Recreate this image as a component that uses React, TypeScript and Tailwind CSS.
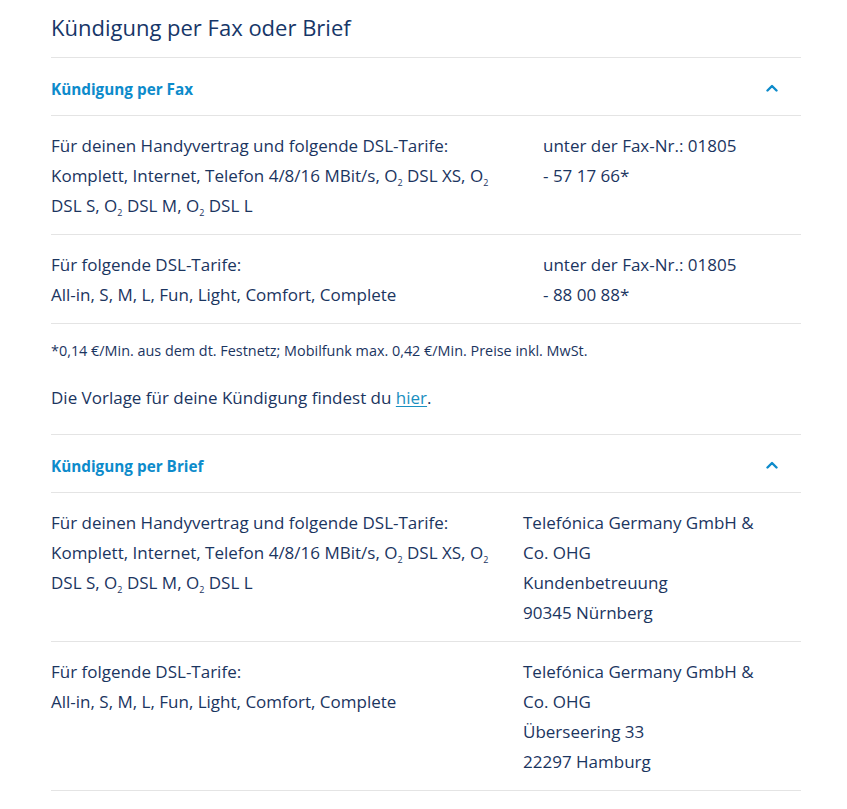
import React from "react";

const O2 = () => (
  <>
    O<sub className="text-[9px] align-[-2px]">2</sub>
  </>
);

const tarifs = (
  <>
    Für deinen Handyvertrag und folgende DSL-Tarife:
    <br />
    Komplett, Internet, Telefon 4/8/16 MBit/s, <O2 /> DSL XS, <O2 />
    <br />
    DSL S, <O2 /> DSL M, <O2 /> DSL L
  </>
);

const dslTarifs = (
  <>
    Für folgende DSL-Tarife:
    <br />
    All-in, S, M, L, Fun, Light, Comfort, Complete
  </>
);

function Chevron() {
  return (
    <svg width="12" height="8" viewBox="0 0 12 8" className="mr-[23px] -mt-[4px]">
      <path d="M1.5 6.5 L6 2 L10.5 6.5" fill="none" stroke="#0d8bcb" strokeWidth="2.4" strokeLinecap="round" strokeLinejoin="round" />
    </svg>
  );
}

function SectionHeader({ title }: { title: string }) {
  return (
    <div className="flex items-center justify-between h-[58px] pt-[6px] border-b border-[#e4e4e4]">
      <span className="text-[15.3px] font-bold text-[#0d8bcb]">{title}</span>
      <Chevron />
    </div>
  );
}

function Row({ left, right, leftW }: { left: React.ReactNode; right: React.ReactNode; leftW: string }) {
  return (
    <div className="flex border-b border-[#e4e4e4] pt-[15px] pb-[13px] text-[17px] leading-[30px]">
      <div className={leftW}>{left}</div>
      <div className="flex-1 pr-[40px]">{right}</div>
    </div>
  );
}

export default function App() {
  return (
    <div className="bg-white min-h-[809px] px-[51px] text-[#1b355f]" style={{ fontFamily: "'Segoe UI', 'Open Sans', 'Liberation Sans', sans-serif" }}>
      <div className="w-[750px]">
        <h1 className="text-[22px] font-normal leading-[54px] h-[58px] border-b border-[#e4e4e4] text-[#163668]">
          Kündigung per Fax oder Brief
        </h1>
        <SectionHeader title="Kündigung per Fax" />
        <Row
          leftW="w-[492px] shrink-0"
          left={tarifs}
          right={
            <>
              unter der Fax-Nr.: 01805
              <br />- 57 17 66*
            </>
          }
        />
        <Row
          leftW="w-[492px] shrink-0"
          left={dslTarifs}
          right={
            <>
              unter der Fax-Nr.: 01805
              <br />- 88 00 88*
            </>
          }
        />
        <p className="text-[14.4px] leading-[20px] pt-[17px]">
          *0,14 €/Min. aus dem dt. Festnetz; Mobilfunk max. 0,42 €/Min. Preise inkl. MwSt.
        </p>
        <p className="text-[17px] leading-[30px] pt-[22px] pb-[21px] border-b border-[#e4e4e4]">
          Die Vorlage für deine Kündigung findest du{" "}
          <a href="#" className="text-[#1a8fc0] underline underline-offset-2">
            hier
          </a>
          .
        </p>
        <SectionHeader title="Kündigung per Brief" />
        <Row
          leftW="w-[472px] shrink-0"
          left={tarifs}
          right={
            <>
              Telefónica Germany GmbH &amp;
              <br />
              Co. OHG
              <br />
              Kundenbetreuung
              <br />
              90345 Nürnberg
            </>
          }
        />
        <Row
          leftW="w-[472px] shrink-0"
          left={dslTarifs}
          right={
            <>
              Telefónica Germany GmbH &amp;
              <br />
              Co. OHG
              <br />
              Überseering 33
              <br />
              22297 Hamburg
            </>
          }
        />
      </div>
    </div>
  );
}
